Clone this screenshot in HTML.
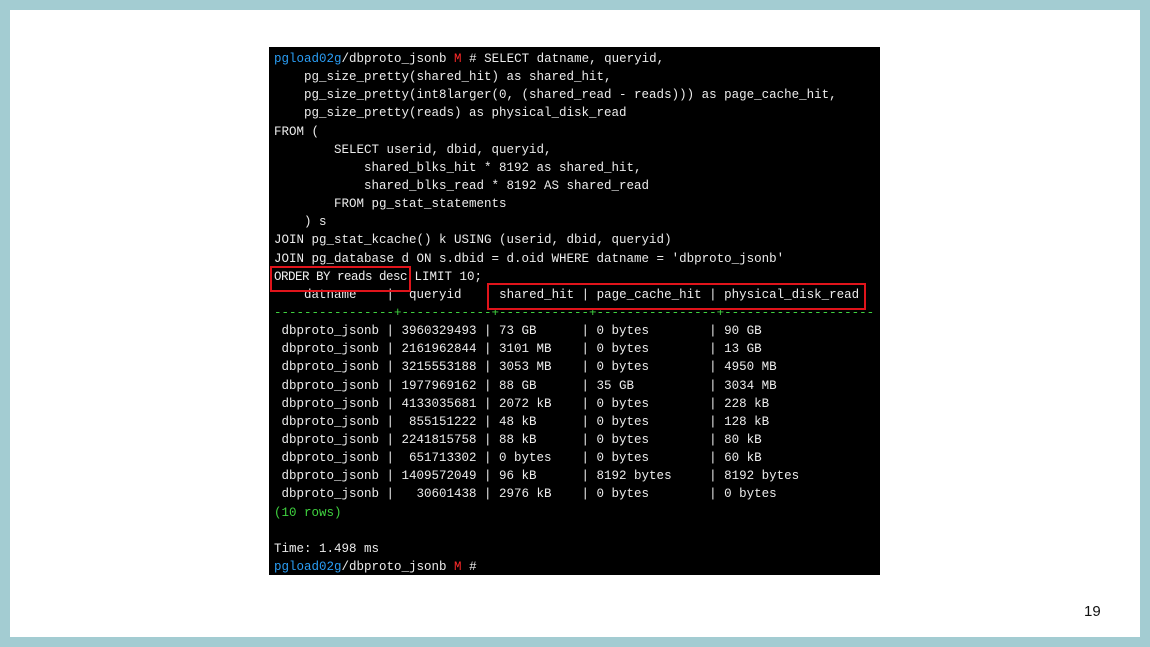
<!DOCTYPE html>
<html><head><meta charset="utf-8"><style>
html,body{margin:0;padding:0}
body{width:1150px;height:647px;background:#a3ccd2;position:relative;overflow:hidden;font-family:"Liberation Sans",sans-serif}
.inner{position:absolute;left:10px;top:10px;width:1130px;height:627px;background:#fff}
.term{position:absolute;left:269px;top:47px;width:611px;height:528px;background:#000;overflow:hidden}
pre{position:absolute;left:5px;top:3px;margin:0;font-family:"Liberation Mono",monospace;font-size:12.5px;line-height:18.14px;color:#ececec;white-space:pre}
.b{color:#2a9df4}.r{color:#ff2a2a}.g{color:#3fd23f}
.box{position:absolute;border:2px solid #e0141b;box-sizing:border-box}
.num{position:absolute;left:1084px;top:603px;font-size:15px;color:#111}
</style></head><body>
<div class="inner"></div>
<div class="term"><pre><span class="b">pgload02g</span>/dbproto_jsonb <span class="r">M</span> # SELECT datname, queryid,
    pg_size_pretty(shared_hit) as shared_hit,
    pg_size_pretty(int8larger(0, (shared_read - reads))) as page_cache_hit,
    pg_size_pretty(reads) as physical_disk_read
FROM (
        SELECT userid, dbid, queryid,
            shared_blks_hit * 8192 as shared_hit,
            shared_blks_read * 8192 AS shared_read
        FROM pg_stat_statements
    ) s
JOIN pg_stat_kcache() k USING (userid, dbid, queryid)
JOIN pg_database d ON s.dbid = d.oid WHERE datname = 'dbproto_jsonb'
<span style="letter-spacing:-0.5px">ORDER BY reads desc</span> LIMIT 10;
    datname    |  queryid   <span class="g">|</span> shared_hit | page_cache_hit | physical_disk_read
<span class="g">----------------+------------+------------+----------------+--------------------</span>
 dbproto_jsonb | 3960329493 | 73 GB      | 0 bytes        | 90 GB
 dbproto_jsonb | 2161962844 | 3101 MB    | 0 bytes        | 13 GB
 dbproto_jsonb | 3215553188 | 3053 MB    | 0 bytes        | 4950 MB
 dbproto_jsonb | 1977969162 | 88 GB      | 35 GB          | 3034 MB
 dbproto_jsonb | 4133035681 | 2072 kB    | 0 bytes        | 228 kB
 dbproto_jsonb |  855151222 | 48 kB      | 0 bytes        | 128 kB
 dbproto_jsonb | 2241815758 | 88 kB      | 0 bytes        | 80 kB
 dbproto_jsonb |  651713302 | 0 bytes    | 0 bytes        | 60 kB
 dbproto_jsonb | 1409572049 | 96 kB      | 8192 bytes     | 8192 bytes
 dbproto_jsonb |   30601438 | 2976 kB    | 0 bytes        | 0 bytes
<span class="g">(10 rows)</span>

Time: 1.498 ms
<span class="b">pgload02g</span>/dbproto_jsonb <span class="r">M</span> #</pre></div>
<div class="box" style="left:270px;top:266px;width:141px;height:26px"></div>
<div class="box" style="left:487px;top:283px;width:379px;height:27px"></div>
<div class="num">19</div>
</body></html>
